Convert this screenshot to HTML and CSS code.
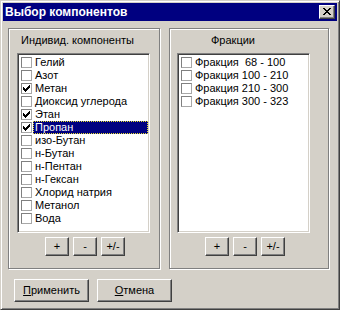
FILE: index.html
```html
<!DOCTYPE html>
<html lang="ru">
<head>
<meta charset="utf-8">
<title>Выбор компонентов</title>
<link rel="stylesheet" href="styles.css">
</head>
<body>
<div class="window">
  <div class="titlebar">
    <span class="title">Выбор компонентов</span>
    <button class="close" aria-label="Закрыть">
      <svg width="8" height="7" viewBox="0 0 8 7" shape-rendering="crispEdges"><path d="M0 0h2v1H0zM6 0h2v1H6zM1 1h2v1H1zM5 1h2v1H5zM2 2h4v1H2zM3 3h2v1H3zM2 4h4v1H2zM1 5h2v1H1zM5 5h2v1H5zM0 6h2v1H0zM6 6h2v1H6z" fill="#000"/></svg>
    </button>
  </div>
  <div class="groups">
    <div class="group group-left">
      <div class="group-label">Индивид. компоненты</div>
      <div class="list">
        <div class="row"><span class="cb"></span><span class="label">Гелий</span></div>
        <div class="row"><span class="cb"></span><span class="label">Азот</span></div>
        <div class="row"><span class="cb checked"><svg width="9" height="9" viewBox="0 0 9 9" shape-rendering="crispEdges"><path d="M1 3h1v3H1zM2 4h1v3H2zM3 5h1v3H3zM4 4h1v3H4zM5 3h1v3H5zM6 2h1v3H6zM7 1h1v3H7z" fill="#000"/></svg></span><span class="label">Метан</span></div>
        <div class="row"><span class="cb"></span><span class="label">Диоксид углерода</span></div>
        <div class="row"><span class="cb checked"><svg width="9" height="9" viewBox="0 0 9 9" shape-rendering="crispEdges"><path d="M1 3h1v3H1zM2 4h1v3H2zM3 5h1v3H3zM4 4h1v3H4zM5 3h1v3H5zM6 2h1v3H6zM7 1h1v3H7z" fill="#000"/></svg></span><span class="label">Этан</span></div>
        <div class="row"><span class="cb checked"><svg width="9" height="9" viewBox="0 0 9 9" shape-rendering="crispEdges"><path d="M1 3h1v3H1zM2 4h1v3H2zM3 5h1v3H3zM4 4h1v3H4zM5 3h1v3H5zM6 2h1v3H6zM7 1h1v3H7z" fill="#000"/></svg></span><span class="label selected">Пропан</span></div>
        <div class="row"><span class="cb"></span><span class="label">изо-Бутан</span></div>
        <div class="row"><span class="cb"></span><span class="label">н-Бутан</span></div>
        <div class="row"><span class="cb"></span><span class="label">н-Пентан</span></div>
        <div class="row"><span class="cb"></span><span class="label">н-Гексан</span></div>
        <div class="row"><span class="cb"></span><span class="label">Хлорид натрия</span></div>
        <div class="row"><span class="cb"></span><span class="label">Метанол</span></div>
        <div class="row"><span class="cb"></span><span class="label">Вода</span></div>
      </div>
      <div class="btnrow">
        <button class="btn">+</button>
        <button class="btn">-</button>
        <button class="btn">+/-</button>
      </div>
    </div>
    <div class="group group-right">
      <div class="group-label">Фракции</div>
      <div class="list">
        <div class="row"><span class="cb"></span><span class="label">Фракция  68 - 100</span></div>
        <div class="row"><span class="cb"></span><span class="label">Фракция 100 - 210</span></div>
        <div class="row"><span class="cb"></span><span class="label">Фракция 210 - 300</span></div>
        <div class="row"><span class="cb"></span><span class="label">Фракция 300 - 323</span></div>
      </div>
      <div class="btnrow">
        <button class="btn">+</button>
        <button class="btn">-</button>
        <button class="btn">+/-</button>
      </div>
    </div>
  </div>
  <div class="actions">
    <button class="btn btn-wide"><u>П</u>рименить</button>
    <button class="btn btn-wide"><u>О</u>тмена</button>
  </div>
</div>
</body>
</html>
```

FILE: styles.css
```css
html, body {
  margin: 0;
  background: #d4d0c8;
}
body {
  font-family: "Liberation Sans", Arial, sans-serif;
  font-size: 11px;
  color: #000;
}
.window {
  width: 340px;
  height: 310px;
  box-sizing: border-box;
  border: 1px solid;
  border-color: #d4d0c8 #404040 #404040 #d4d0c8;
  box-shadow: inset 1px 1px #fff, inset -1px -1px #808080;
  padding: 2px;
  background: #d4d0c8;
}
.titlebar {
  height: 18px;
  background: #000080;
  display: flex;
  align-items: center;
  justify-content: space-between;
  padding-left: 2px;
}
.title {
  color: #fff;
  font-weight: bold;
  font-size: 12px;
  line-height: 18px;
}
.close {
  width: 16px;
  height: 14px;
  margin: 0 2px 0 0;
  padding: 0;
  box-sizing: border-box;
  background: #d4d0c8;
  border: 1px solid;
  border-color: #fff #404040 #404040 #fff;
  box-shadow: inset -1px -1px #808080;
  display: flex;
  align-items: center;
  justify-content: center;
}
.close svg {
  display: block;
  margin-left: -1px;
  margin-top: -1px;
}
.groups {
  display: flex;
  gap: 9px;
  margin: 7px 0 0 5px;
}
.group {
  box-sizing: border-box;
  height: 241px;
  border: 1px solid #808080;
  box-shadow: inset 1px 1px #fff, 1px 1px #fff;
  padding-top: 5px;
  display: flex;
  flex-direction: column;
}
.group-left { width: 152px; }
.group-right { width: 160px; }
.group-label {
  height: 13px;
  line-height: 13px;
  white-space: nowrap;
}
.group-left .group-label { margin-left: 12px; }
.group-right .group-label { margin-left: 41px; }
.list {
  margin-top: 6px;
  width: 133px;
  height: 180px;
  box-sizing: border-box;
  background: #fff;
  border: 1px solid;
  border-color: #808080 #fff #fff #808080;
  box-shadow: inset 1px 1px #404040, inset -1px -1px #d4d0c8;
  padding: 2px 1px 0 3px;
}
.group-left .list { margin-left: 8px; }
.group-right .list { margin-left: 7px; }
.row {
  display: flex;
  height: 13px;
}
.cb {
  width: 11px;
  height: 11px;
  margin-top: 1px;
  box-sizing: border-box;
  border: 1px solid;
  border-color: #808080 #a8a8a8 #a8a8a8 #808080;
  background: #fff;
  flex: none;
}
.cb svg { display: block; }
.label {
  flex: 1;
  margin-left: 1px;
  padding-left: 2px;
  line-height: 13px;
  height: 13px;
  white-space: pre;
}
.label.selected {
  background: #000080;
  color: #fff;
  outline: 1px dotted #e8e030;
  outline-offset: -1px;
}
.btnrow {
  display: flex;
  gap: 4px;
  margin-top: 4px;
}
.group-left .btnrow { margin-left: 36px; }
.group-right .btnrow { margin-left: 35px; }
.btn {
  width: 24px;
  height: 19px;
  box-sizing: border-box;
  padding: 0;
  margin: 0;
  font: inherit;
  color: #000;
  background: #d4d0c8;
  border: 1px solid;
  border-color: #fff #404040 #404040 #fff;
  box-shadow: inset -1px -1px #808080;
  line-height: 15px;
  text-align: center;
}
.actions {
  display: flex;
  gap: 8px;
  margin: 10px 0 0 11px;
}
.btn-wide {
  width: 75px;
  height: 23px;
  line-height: 19px;
}
.btn u { text-decoration-thickness: 1px; text-underline-offset: 1px; }
```
